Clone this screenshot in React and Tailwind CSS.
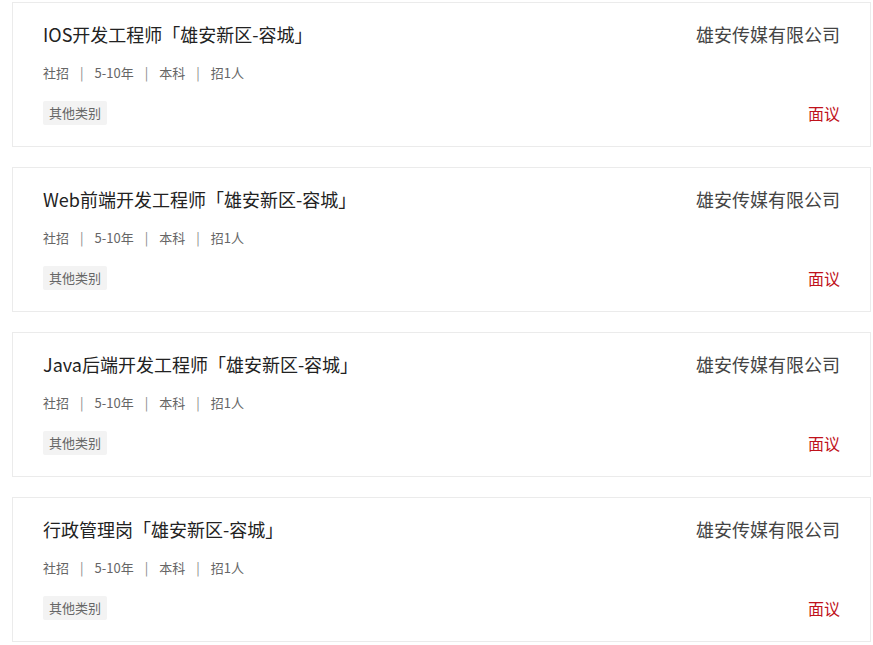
const jobs = [
  { title: 'IOS开发工程师「雄安新区-容城」' },
  { title: 'Web前端开发工程师「雄安新区-容城」' },
  { title: 'Java后端开发工程师「雄安新区-容城」' },
  { title: '行政管理岗「雄安新区-容城」' },
];

const meta = ['社招', '5-10年', '本科', '招1人'];

export default function App() {
  return (
    <div
      className="w-[873px] min-h-[645px] bg-white pt-[2px] pl-[12px] pr-[2px]"
      style={{ fontFamily: '"Microsoft YaHei", "Noto Sans CJK SC", "Noto Sans", sans-serif' }}
    >
      <div className="flex flex-col gap-[20px]">
        {jobs.map((job) => (
          <JobCard key={job.title} job={job} />
        ))}
      </div>
    </div>
  );
}

function JobCard({ job }) {
  return (
    <div className="h-[145px] border border-[#ebebeb] bg-white px-[30px] pt-[19px]">
      {/* title + company */}
      <div className="flex h-[24px] items-center justify-between">
        <h3 className="text-[18px] leading-[24px] font-normal text-[#222]">{job.title}</h3>
        <span className="text-[18px] leading-[24px] text-[#444]">雄安传媒有限公司</span>
      </div>

      {/* meta */}
      <div className="mt-[17px] flex h-[20px] items-center text-[13px] leading-[20px] text-[#666]">
        {meta.map((m, i) => (
          <span key={m} className="flex items-center">
            {i > 0 && <span className="mx-[11px] text-[#888]">|</span>}
            {m}
          </span>
        ))}
      </div>

      {/* tag + salary */}
      <div className="mt-[18px] flex h-[24px] items-center justify-between">
        <span className="flex h-[24px] items-center rounded-[2px] bg-[#f3f3f3] px-[6px] text-[13px] text-[#666]">
          其他类别
        </span>
        <span className="text-[16px] leading-[24px] text-[#c0121b]">面议</span>
      </div>
    </div>
  );
}
